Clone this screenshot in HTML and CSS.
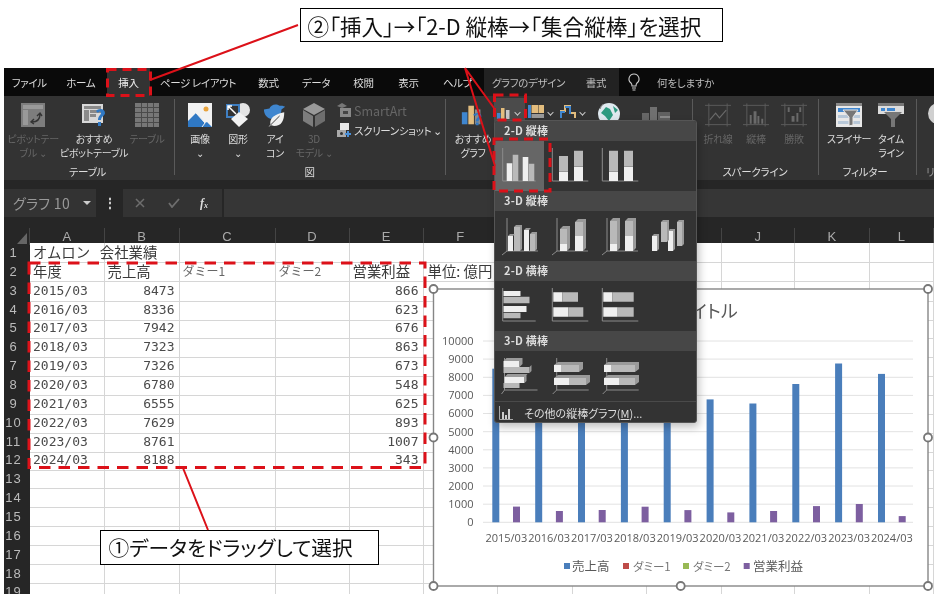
FILE: index.html
```html
<!DOCTYPE html>
<html lang="ja">
<head>
<meta charset="utf-8">
<title>Excel グラフの挿入</title>
<link rel="stylesheet" href="styles.css">
</head>
<body>
<div class="page">
  <div class="app">
    <nav class="tabs">
      <span class="tab">ファイル</span><span class="tab">ホーム</span><span class="tab on">挿入</span><span class="tab">ページ レイアウト</span><span class="tab">数式</span><span class="tab">データ</span><span class="tab">校閲</span><span class="tab">表示</span><span class="tab">ヘルプ</span>
      <span class="ctx"><span class="tab">グラフのデザイン</span><span class="tab">書式</span></span>
      <span class="tellwrap">
        <svg class="bulb" viewBox="0 0 14 18"><path d="M7 1a5 5 0 0 0-3 9c.7.7 1 1.5 1 3h4c0-1.500.3-2.300 1-3A5 5 0 0 0 7 1zM5 15h4M5.500 17h3" fill="none" stroke="#ccc" stroke-width="1.100"/></svg>
        <span class="tell">何をしますか</span>
      </span>
    </nav>

    <section class="ribbon">
      <div class="group g-table">
        <div class="tools">
          <div class="btn w50 off">
            <svg class="ico" viewBox="0 0 24 24"><rect width="24" height="24" fill="#7d7d7d"/><path d="M2 2h20v4H2zM2 7h5v15H2z" fill="#999"/><path d="M11 19c5 0 8-3 8-8M16 13l3-3 2 3M13 16l-3 3 3 2" fill="none" stroke="#333" stroke-width="1.400"/></svg>
            <span>ピボットテー<br>ブル ⌄</span>
          </div>
          <div class="btn w72">
            <svg class="ico" viewBox="0 0 24 24"><rect x="0" y="1" width="21" height="19" fill="#d8d8d8"/><path d="M2 3h17v3H2zM2 7h5v11H2zM8 7h11v3H8zM8 11h6v3H8z" fill="#8a8a8a"/><path d="M14 8c2-3 9-3 9 2 0 3-4 3-4 7h-3c0-4 3-5 3-7s-2-2-3 0zM16 19h3v4h-3z" fill="#2f78c4"/></svg>
            <span>おすすめ<br>ピボットテーブル</span>
          </div>
          <div class="btn w34 off">
            <svg class="ico" viewBox="0 0 24 24"><rect width="24" height="24" fill="#777"/><path d="M0 4h24v1H0zM0 9h24v1H0zM0 14h24v1H0zM0 19h24v1H0zM6 0h1v24H6zM12 0h1v24h-1zM18 0h1v24h-1z" fill="#4a4a4a"/></svg>
            <span>テーブル</span>
          </div>
        </div>
        <div class="glabel">テーブル</div>
      </div>

      <div class="group g-pic">
        <div class="tools">
          <div class="btn w38">
            <svg class="ico" viewBox="0 0 24 24"><rect width="24" height="24" fill="#f2f2f2"/><circle cx="18" cy="6" r="2.500" fill="#e8a33d"/><path d="M0 24v-6l8-8 9 10 2-1 5 5z" fill="#2f78c4"/><path d="M8 10l9 10-3 4" fill="none" stroke="#f2f2f2"/></svg>
            <span>画像<br>⌄</span>
          </div>
          <div class="btn w38">
            <svg class="ico wide" viewBox="0 0 26 24"><circle cx="18" cy="7" r="7" fill="#e4e4e4"/><path d="M1 1h14v14H1z" fill="#3f7fc2"/><path d="M3 3h10v10H3z" fill="#333"/><path d="M3 3l8 8M7 3H3v4" stroke="#fff" fill="none" stroke-width="1.500"/><path d="M14 9l9 7-9 8-8-8z" fill="#f2f2f2"/></svg>
            <span>図形<br>⌄</span>
          </div>
          <div class="btn w36">
            <svg class="ico wide" viewBox="0 0 26 26"><path d="M1 7l6-1c1-4 7-6 11-3 2 0 4 0 6 1l-4 3c0 7-6 11-12 10C4 16 1 12 1 7z" fill="#3f86cf"/><path d="M6 26l2-3c-1-7 5-11 15-13 0 9-3 15-11 15l-3-1z" fill="#f0f0f0"/><path d="M7 25L18 14" stroke="#333"/></svg>
            <span>アイ<br>コン</span>
          </div>
          <div class="btn w42 off">
            <svg class="ico" viewBox="0 0 24 24"><path d="M12 0l11 6-11 6L1 6z" fill="#999"/><path d="M1 7l10 6v11L1 18z" fill="#7d7d7d"/><path d="M23 7l-10 6v11l10-6z" fill="#6e6e6e"/></svg>
            <span>3D<br>モデル ⌄</span>
          </div>
          <div class="smalls">
            <div class="small off sa">
              <svg class="ico14" viewBox="0 0 14 14"><path d="M0 3l5-3 5 3-5 2z" fill="#777"/><rect x="3" y="5" width="11" height="9" fill="#888"/><rect x="6" y="8" width="5" height="3" fill="#444"/></svg>
              <span>SmartArt</span>
            </div>
            <div class="small">
              <svg class="ico14" viewBox="0 0 14 14"><rect x="3" y="0" width="9" height="7" fill="#e8e8e8"/><rect x="0" y="7" width="9" height="7" fill="#aaa"/><circle cx="4.500" cy="10.500" r="1.500" fill="#333"/><path d="M11 8v6M8 11h6" stroke="#4a90d9" stroke-width="2"/></svg>
              <span>スクリーンショット ⌄</span>
            </div>
          </div>
        </div>
        <div class="glabel">図</div>
      </div>

      <div class="group g-chart">
        <div class="tools">
          <div class="btn w42 rec">
            <svg class="ico wide" viewBox="0 0 28 24"><rect x="2" y="9" width="6" height="13" fill="#3f86cf"/><rect x="9" y="2" width="6" height="20" fill="#e3bd7e"/><rect x="16" y="6" width="6" height="16" fill="#8a8a8a"/><path d="M14 12c2-3 9-3 9 1 0 3-3 3-3 6h-3c0-4 3-4 3-6s-2-2-3 0zM17 20h3v3h-3z" fill="#2f78c4"/></svg>
            <span>おすすめ<br>グラフ</span>
          </div>
          <div class="cbtn hot">
            <svg class="ci" viewBox="0 0 14 11"><rect x="0" y="5" width="3.500" height="6" fill="#3f86cf"/><rect x="4" y="0" width="3.500" height="11" fill="#e3bd7e"/><rect x="9" y="2" width="3.500" height="9" fill="#c8c8c8"/></svg><b class="chev"></b>
          </div>
          <div class="cbtn b31">
            <svg class="ci big" viewBox="0 0 16 13"><rect x="0" y="0" width="3" height="13" fill="#3f86cf"/><rect x="3.500" y="0" width="7" height="8" fill="#e3bd7e"/><rect x="11" y="0" width="5" height="8" fill="#e3bd7e"/><rect x="3.500" y="9" width="12.500" height="4" fill="#999"/></svg><b class="chev"></b>
          </div>
          <div class="cbtn b34">
            <svg class="ci big" viewBox="0 0 16 13"><path d="M1 12V6h4V1h5v7h5v5" fill="none" stroke="#e3bd7e" stroke-width="2"/><path d="M1 13V7h4" fill="none" stroke="#3f86cf" stroke-width="2"/><path d="M5 2h5v7" fill="none" stroke="#3f86cf" stroke-width="2"/></svg><b class="chev"></b>
          </div>
          <svg class="globe" viewBox="0 0 22 18"><circle cx="11" cy="11" r="11" fill="#dfe9ef"/><path d="M3 10l5-6 4 2 3 6-4 6-4-5zM15 3l5 4-3 3z" fill="#2d9a80"/><path d="M5 1A13 13 0 0 0 2 6" stroke="#777" fill="none"/></svg>
          <svg class="pivotc" viewBox="0 0 28 13"><rect x="0" y="6" width="7" height="7" fill="#666"/><rect x="8" y="0" width="7" height="13" fill="#707070"/><rect x="16" y="5" width="12" height="8" fill="#616161"/><rect x="18" y="9" width="10" height="2" fill="#8a8a8a"/></svg>
        </div>
      </div>

      <div class="group g-spark">
        <div class="tools">
          <div class="btn w38 off">
            <svg class="ico wide" viewBox="0 0 27 24"><path d="M0 2h27M0 22h27M4 0v24M23 0v24" stroke="#5c5c5c" fill="none"/><path d="M5 17l6-7 4 5 7-8" stroke="#6a6a6a" fill="none" stroke-width="1.200"/></svg>
            <span>折れ線</span>
          </div>
          <div class="btn w38 off">
            <svg class="ico wide" viewBox="0 0 27 24"><path d="M0 2h27M0 22h27M4 0v24M23 0v24" stroke="#5c5c5c" fill="none"/><path d="M7 12h2v9H7zM11 8h3v13h-3zM15 13h2v8h-2zM19 16h2v5h-2z" fill="#6a6a6a"/></svg>
            <span>縦棒</span>
          </div>
          <div class="btn w38 off">
            <svg class="ico wide" viewBox="0 0 27 24"><path d="M0 2h27M0 22h27M4 0v24M23 0v24" stroke="#5c5c5c" fill="none"/><path d="M7 4h2v5H7zM19 4h2v5h-2zM11 13h3v6h-3zM16 10h2v9h-2z" fill="#6a6a6a"/></svg>
            <span>勝敗</span>
          </div>
        </div>
        <div class="glabel">スパークライン</div>
      </div>

      <div class="group g-filter">
        <div class="tools">
          <div class="btn w56">
            <svg class="ico wide" viewBox="0 0 26 24"><rect width="26" height="24" fill="#e8e8e8"/><rect width="26" height="3" fill="#8a8a8a"/><rect x="2" y="5" width="22" height="4" fill="#3f86cf"/><rect x="2" y="12" width="22" height="3" fill="#b8c8d8"/><rect x="2" y="18" width="22" height="3" fill="#b8c8d8"/><path d="M7 7h15l-5 7v8l-4 1v-9z" fill="#777" stroke="#e8e8e8"/></svg>
            <span>スライサー</span>
          </div>
          <div class="btn w28">
            <svg class="ico wide" viewBox="0 0 26 24"><rect y="3" width="26" height="8" fill="#dcdcdc"/><rect y="0" width="26" height="3" fill="#777"/><rect x="3" y="5" width="4" height="3" fill="#3f86cf"/><rect x="9" y="5" width="8" height="3" fill="#3f86cf"/><path d="M6 9h18l-7 7v8h-4v-8z" fill="#777"/></svg>
            <span>タイム<br>ライン</span>
          </div>
        </div>
        <div class="glabel">フィルター</div>
      </div>

      <div class="group g-link">
        <div class="edge-disc"></div>
        <div class="glabel">リ</div>
      </div>
    </section>

    <section class="fbar">
      <div class="namebox">グラフ 10<b class="tri"></b></div>
      <div class="fdots">⋮</div>
      <div class="fbtns">
        <svg class="fx-ico" viewBox="0 0 10 10"><path d="M1 1l8 8M9 1L1 9" stroke="#6e6e6e" stroke-width="1.500"/></svg>
        <svg class="fx-ico" viewBox="0 0 12 10"><path d="M1 5l3 4 7-8" stroke="#6e6e6e" stroke-width="1.800" fill="none"/></svg>
        <span class="fx">f<sub>x</sub></span>
      </div>
      <div class="finput"></div>
    </section>

    <section class="sheet">
      <div class="row heads">
        <div class="corner"></div><div>A</div><div>B</div><div>C</div><div>D</div><div>E</div><div>F</div><div>G</div><div>H</div><div>I</div><div>J</div><div>K</div><div>L</div>
      </div>
      <div class="row"><div class="rh">1</div><div class="c jp">オムロン&nbsp;&nbsp;&nbsp;会社業績</div><div class="c"></div><div class="c"></div><div class="c"></div><div class="c"></div><div class="c"></div><div class="c"></div><div class="c"></div><div class="c"></div><div class="c"></div><div class="c"></div><div class="c"></div></div>
      <div class="row"><div class="rh">2</div><div class="c jp">年度</div><div class="c jp">売上高</div><div class="c dummy">ダミー1</div><div class="c dummy">ダミー2</div><div class="c jp">営業利益</div><div class="c jp unit">単位: 億円</div><div class="c"></div><div class="c"></div><div class="c"></div><div class="c"></div><div class="c"></div><div class="c"></div></div>
      <div class="row"><div class="rh">3</div><div class="c">2015/03</div><div class="c r">8473</div><div class="c"></div><div class="c"></div><div class="c r">866</div><div class="c"></div><div class="c"></div><div class="c"></div><div class="c"></div><div class="c"></div><div class="c"></div><div class="c"></div></div>
      <div class="row"><div class="rh">4</div><div class="c">2016/03</div><div class="c r">8336</div><div class="c"></div><div class="c"></div><div class="c r">623</div><div class="c"></div><div class="c"></div><div class="c"></div><div class="c"></div><div class="c"></div><div class="c"></div><div class="c"></div></div>
      <div class="row"><div class="rh">5</div><div class="c">2017/03</div><div class="c r">7942</div><div class="c"></div><div class="c"></div><div class="c r">676</div><div class="c"></div><div class="c"></div><div class="c"></div><div class="c"></div><div class="c"></div><div class="c"></div><div class="c"></div></div>
      <div class="row"><div class="rh">6</div><div class="c">2018/03</div><div class="c r">7323</div><div class="c"></div><div class="c"></div><div class="c r">863</div><div class="c"></div><div class="c"></div><div class="c"></div><div class="c"></div><div class="c"></div><div class="c"></div><div class="c"></div></div>
      <div class="row"><div class="rh">7</div><div class="c">2019/03</div><div class="c r">7326</div><div class="c"></div><div class="c"></div><div class="c r">673</div><div class="c"></div><div class="c"></div><div class="c"></div><div class="c"></div><div class="c"></div><div class="c"></div><div class="c"></div></div>
      <div class="row"><div class="rh">8</div><div class="c">2020/03</div><div class="c r">6780</div><div class="c"></div><div class="c"></div><div class="c r">548</div><div class="c"></div><div class="c"></div><div class="c"></div><div class="c"></div><div class="c"></div><div class="c"></div><div class="c"></div></div>
      <div class="row"><div class="rh">9</div><div class="c">2021/03</div><div class="c r">6555</div><div class="c"></div><div class="c"></div><div class="c r">625</div><div class="c"></div><div class="c"></div><div class="c"></div><div class="c"></div><div class="c"></div><div class="c"></div><div class="c"></div></div>
      <div class="row"><div class="rh">10</div><div class="c">2022/03</div><div class="c r">7629</div><div class="c"></div><div class="c"></div><div class="c r">893</div><div class="c"></div><div class="c"></div><div class="c"></div><div class="c"></div><div class="c"></div><div class="c"></div><div class="c"></div></div>
      <div class="row"><div class="rh">11</div><div class="c">2023/03</div><div class="c r">8761</div><div class="c"></div><div class="c"></div><div class="c r">1007</div><div class="c"></div><div class="c"></div><div class="c"></div><div class="c"></div><div class="c"></div><div class="c"></div><div class="c"></div></div>
      <div class="row"><div class="rh">12</div><div class="c">2024/03</div><div class="c r">8188</div><div class="c"></div><div class="c"></div><div class="c r">343</div><div class="c"></div><div class="c"></div><div class="c"></div><div class="c"></div><div class="c"></div><div class="c"></div><div class="c"></div></div>
      <div class="row"><div class="rh">13</div><div class="c"></div><div class="c"></div><div class="c"></div><div class="c"></div><div class="c"></div><div class="c"></div><div class="c"></div><div class="c"></div><div class="c"></div><div class="c"></div><div class="c"></div><div class="c"></div></div>
      <div class="row"><div class="rh">14</div><div class="c"></div><div class="c"></div><div class="c"></div><div class="c"></div><div class="c"></div><div class="c"></div><div class="c"></div><div class="c"></div><div class="c"></div><div class="c"></div><div class="c"></div><div class="c"></div></div>
      <div class="row"><div class="rh">15</div><div class="c"></div><div class="c"></div><div class="c"></div><div class="c"></div><div class="c"></div><div class="c"></div><div class="c"></div><div class="c"></div><div class="c"></div><div class="c"></div><div class="c"></div><div class="c"></div></div>
      <div class="row"><div class="rh">16</div><div class="c"></div><div class="c"></div><div class="c"></div><div class="c"></div><div class="c"></div><div class="c"></div><div class="c"></div><div class="c"></div><div class="c"></div><div class="c"></div><div class="c"></div><div class="c"></div></div>
      <div class="row"><div class="rh">17</div><div class="c"></div><div class="c"></div><div class="c"></div><div class="c"></div><div class="c"></div><div class="c"></div><div class="c"></div><div class="c"></div><div class="c"></div><div class="c"></div><div class="c"></div><div class="c"></div></div>
      <div class="row"><div class="rh">18</div><div class="c"></div><div class="c"></div><div class="c"></div><div class="c"></div><div class="c"></div><div class="c"></div><div class="c"></div><div class="c"></div><div class="c"></div><div class="c"></div><div class="c"></div><div class="c"></div></div>
      <div class="row"><div class="rh">19</div><div class="c"></div><div class="c"></div><div class="c"></div><div class="c"></div><div class="c"></div><div class="c"></div><div class="c"></div><div class="c"></div><div class="c"></div><div class="c"></div><div class="c"></div><div class="c"></div></div>
    </section>
  </div>

  <svg class="chart" viewBox="433 289 500 300">
    <rect class="frame" x="433.500" y="289" width="494.500" height="297"/>
    <g class="gl">
      <path d="M483 341h430M483 359.100h430M483 377.300h430M483 395.400h430M483 413.500h430M483 431.700h430M483 449.800h430M483 467.900h430M483 486h430M483 504.200h430M483 522.300h430"/>
    </g>
    <text class="title" x="681" y="318">グラフ タイトル</text>
    <g class="yax">
      <text x="473.500" y="345">10000</text><text x="473.500" y="363">9000</text><text x="473.500" y="381">8000</text><text x="473.500" y="399">7000</text><text x="473.500" y="417">6000</text><text x="473.500" y="435.500">5000</text><text x="473.500" y="453.500">4000</text><text x="473.500" y="472">3000</text><text x="473.500" y="490">2000</text><text x="473.500" y="508">1000</text><text x="473.500" y="526">0</text>
    </g>
    <g class="blue">
      <rect x="492.300" y="368.700" width="7" height="153.600"/><rect x="535.200" y="371.200" width="7" height="151.100"/><rect x="578" y="378.300" width="7" height="144"/><rect x="620.900" y="389.500" width="7" height="132.800"/><rect x="663.700" y="389.500" width="7" height="132.800"/><rect x="706.600" y="399.400" width="7" height="122.900"/><rect x="749.400" y="403.500" width="7" height="118.800"/><rect x="792.300" y="384" width="7" height="138.300"/><rect x="835.100" y="363.500" width="7" height="158.800"/><rect x="878" y="373.900" width="7" height="148.400"/>
    </g>
    <g class="purple">
      <rect x="513" y="506.600" width="7" height="15.700"/><rect x="555.900" y="511" width="7" height="11.300"/><rect x="598.700" y="510" width="7" height="12.300"/><rect x="641.600" y="506.700" width="7" height="15.600"/><rect x="684.400" y="510.100" width="7" height="12.200"/><rect x="727.300" y="512.400" width="7" height="9.900"/><rect x="770.100" y="511" width="7" height="11.300"/><rect x="813" y="506.100" width="7" height="16.200"/><rect x="855.800" y="504" width="7" height="18.300"/><rect x="898.700" y="516.100" width="7" height="6.200"/>
    </g>
    <g class="xax">
      <text x="506.300" y="542">2015/03</text><text x="549.100" y="542">2016/03</text><text x="592" y="542">2017/03</text><text x="634.800" y="542">2018/03</text><text x="677.700" y="542">2019/03</text><text x="720.500" y="542">2020/03</text><text x="763.400" y="542">2021/03</text><text x="806.200" y="542">2022/03</text><text x="849.100" y="542">2023/03</text><text x="891.900" y="542">2024/03</text>
    </g>
    <g class="legend">
      <rect class="lb" x="564" y="563" width="6" height="6"/><text x="572" y="570.500">売上高</text>
      <rect class="lr" x="623" y="563" width="6" height="6"/><text class="lg" x="633" y="570.500">ダミー1</text>
      <rect class="lg2" x="683" y="563" width="6" height="6"/><text class="lg" x="693" y="570.500">ダミー2</text>
      <rect class="lp" x="743.700" y="563" width="6" height="6"/><text x="753" y="570.500">営業利益</text>
    </g>
    <g class="handles">
      <circle cx="433.500" cy="289" r="4"/><circle cx="928" cy="289" r="4"/><circle cx="433.500" cy="437.500" r="4"/><circle cx="928" cy="437.500" r="4"/><circle cx="433.500" cy="586" r="4"/><circle cx="680.700" cy="586" r="4"/><circle cx="928" cy="586" r="4"/>
    </g>
  </svg>

  <aside class="menu">
    <h4>2-D 縦棒</h4>
    <div class="irow">
      <svg class="mi hov" viewBox="0 0 50 50"><path class="ax" d="M8.700 7v33h33"/><path class="lt" d="M12.700 22.300h5.600V40h-5.600zM28.700 16h5.600v24h-5.600z"/><path class="md" d="M18.700 13.700h5.600V40h-5.600zM34.700 22.700h5.600V40h-5.600z"/></svg>
      <svg class="mi" viewBox="0 0 50 50"><path class="ax" d="M8.300 7v33h36"/><path class="md" d="M15 15h9v15.700h-9zM30 9.700h9v16h-9z"/><path class="lt" d="M15 31h9v9h-9zM30 26h9v14h-9z"/></svg>
      <svg class="mi" viewBox="0 0 50 50"><path class="ax" d="M8.300 7v33h36"/><path class="md" d="M15 9.700h9v21h-9zM30 9.700h9v16h-9z"/><path class="lt" d="M15 31h9v9h-9zM30 26h9v14h-9z"/></svg>
    </div>
    <h4>3-D 縦棒</h4>
    <div class="irow">
      <svg class="mi" viewBox="0 0 50 50"><path class="ax" d="M13 7v33M13 40l-5 4M13 40h31"/><path class="lt" d="M14 25h5v15h-5z"/><path class="md" d="M20 16h6v24h-6zM36 23h5v17h-5z"/><path class="lt" d="M30 19h5v21h-5z"/><path class="sd" d="M14 25l2-2h5l-2 2zM20 16l2-2h6l-2 2zM26 16l2-2v24l-2 2zM30 19l2-2h5l-2 2zM36 23l2-2h5l-2 2zM41 23l2-2v17l-2 2z"/></svg>
      <svg class="mi" viewBox="0 0 50 50"><path class="ax" d="M13 7v33M13 40l-5 4M13 40h31"/><path class="md" d="M16 18h7v15h-7zM31 11h8v14h-8z"/><path class="lt" d="M16 33h7v7h-7zM31 25h8v15h-8z"/><path class="sd" d="M16 18l3-3h7l-3 3zM23 18l3-3v22l-3 3zM31 11l3-3h8l-3 3zM39 11l3-3v29l-3 3z"/></svg>
      <svg class="mi" viewBox="0 0 50 50"><path class="ax" d="M13 7v33M13 40l-5 4M13 40h31"/><path class="md" d="M16 10h7v23h-7zM31 10h8v15h-8z"/><path class="lt" d="M16 33h7v7h-7zM31 25h8v15h-8z"/><path class="sd" d="M16 10l3-3h7l-3 3zM23 10l3-3v30l-3 3zM31 10l3-3h8l-3 3zM39 10l3-3v30l-3 3z"/></svg>
      <svg class="mi" viewBox="0 0 50 50"><path class="lt" d="M8 25h5v15H8z"/><path class="md" d="M17 11h6v20h-6z"/><path class="lt" d="M24 20h5v20h-5z"/><path class="md" d="M33 11h5v24h-5z"/><path class="sd" d="M8 25l2-2h5l-2 2zM13 25l2-2v15l-2 2zM17 11l2-2h6l-2 2zM23 11l2-2v20l-2 2zM24 20l2-2h5l-2 2zM29 20l2-2v20l-2 2zM33 11l2-2h5l-2 2zM38 11l2-2v24l-2 2z"/></svg>
    </div>
    <h4>2-D 横棒</h4>
    <div class="irow">
      <svg class="mi" viewBox="0 0 50 50"><path class="ax" d="M8.700 7v33h33"/><path class="lt" d="M9.500 10h17v5h-17zM9.500 25h23v6h-23z"/><path class="md" d="M9.500 15.700h26v6.600h-26zM9.500 31.700h17v5.600h-17z"/></svg>
      <svg class="mi" viewBox="0 0 50 50"><path class="ax" d="M8.300 7v33h36"/><path class="lt" d="M9.300 11.300h9v9.400h-9zM9.300 26.300h15v9.400h-15z"/><path class="md" d="M18.300 11.300H34v9.400H18.300zM24.300 26.300h15v9.400h-15z"/></svg>
      <svg class="mi" viewBox="0 0 50 50"><path class="ax" d="M8.300 7v33h36"/><path class="lt" d="M9.300 11.300h9v9.400h-9zM9.300 26.300h14.400v9.400H9.300z"/><path class="md" d="M18.300 11.300h21.400v9.400H18.300zM23.700 26.300h16v9.400h-16z"/></svg>
    </div>
    <h4>3-D 横棒</h4>
    <div class="irow">
      <svg class="mi" viewBox="0 0 50 50"><path class="ax" d="M10.500 7v32M10.500 39l-3 4M10.500 39h33"/><path class="lt" d="M9.500 10h16v6h-16z"/><path class="md" d="M9.500 16h26v6h-26z"/><path class="lt" d="M10.500 26h20v6h-20z"/><path class="md" d="M9.500 32h16v5h-16z"/><path class="sd" d="M9.500 10l3-3h16l-3 3zM25.500 10l3-3v6l-3 3zM35.500 16l2-2v6l-2 2zM10.500 26l3-3h20l-3 3zM30.500 26l2-2v6l-2 2z"/></svg>
      <svg class="mi" viewBox="0 0 50 50"><path class="ax" d="M12.700 7v32M12.700 39l-4 4M12.700 39h32"/><path class="lt" d="M10 14h7v7h-7zM10 27h15v7H10z"/><path class="md" d="M17 14h18v7H17zM25 27h17v7H25z"/><path class="sd" d="M10 14l4-3h25l-4 3zM35 14l4-3v7l-4 3zM10 27l4-3h32l-4 3zM42 27l4-3v7l-4 3z"/></svg>
      <svg class="mi" viewBox="0 0 50 50"><path class="ax" d="M12.700 7v32M12.700 39l-4 4M12.700 39h32"/><path class="lt" d="M10 14h7v7h-7zM10 27h15v7H10z"/><path class="md" d="M17 14h24v7H17zM25 27h16v7H25z"/><path class="sd" d="M10 14l4-3h31l-4 3zM41 14l4-3v7l-4 3zM10 27l4-3h31l-4 3zM41 27l4-3v7l-4 3z"/></svg>
    </div>
    <div class="more">
      <svg class="more-ico" viewBox="0 0 14 14"><path d="M.5 0v13.500H14" stroke="#aaa" fill="none"/><path d="M3 6h2v7H3zM6 9h2v4H6zM9 3h2v10H9z" fill="#ccc"/></svg>
      <span>その他の縦棒グラフ(<u>M</u>)...</span>
    </div>
  </aside>

  <div class="callout c2">②「挿入」→「2-D 縦棒→「集合縦棒」を選択</div>
  <div class="callout c1">①データをドラッグして選択</div>

  <svg class="marks" viewBox="0 0 950 601">
    <path class="line" d="M298 25L150 80M465 68L494 108M465 68L495 166M183 468L208 530"/>
    <rect class="dash" x="107.500" y="69.500" width="43" height="26"/>
    <rect class="dash" x="494.500" y="95" width="31" height="25"/>
    <rect class="dash" x="494" y="139" width="56" height="52"/>
    <rect class="dash long" x="29" y="263" width="396" height="204.500"/>
  </svg>
</div>
</body>
</html>
```
FILE: styles.css
```css
* { box-sizing: border-box; }
html, body { margin: 0; background: #fff; }
body { font-family: "Noto Sans CJK JP", "Noto Sans", sans-serif; font-feature-settings: "palt"; color: #ddd; }

.page { position: relative; width: 950px; height: 601px; padding: 68px 16px 7px 4px; overflow: hidden; filter: blur(.35px); }
.app { height: 526px; overflow: hidden; background: #262626; }

/* tabs */
.tabs { display: grid; grid-template-columns: 50.500px 52.500px 43px 96px 45px 50px 45px 45px 53px 135px 1fr; height: 28px; background: #0a0a0a; font-size: 10.500px; color: #ddd; }
.tab { display: flex; align-items: center; justify-content: center; white-space: nowrap; letter-spacing: -.35px; }
.tab.on { background: #333; color: #eee; }
.ctx { display: grid; grid-template-columns: 89px 46px; background: #222; color: #bbb; }
.tellwrap { display: flex; align-items: center; padding-left: 8px; }
.bulb { width: 14px; height: 18px; flex: none; }
.tell { margin-left: 16px; color: #bbb; letter-spacing: -.2px; }

/* ribbon */
.ribbon { display: flex; height: 84px; background: #333; }
.group { position: relative; flex: none; display: flex; flex-direction: column; height: 100%; }
.group::after { content: ""; position: absolute; right: 0; top: 3px; bottom: 5px; width: 1px; background: #5a5a5a; }
.g-table { width: 171px; padding-left: 4px; }
.g-pic { width: 271px; padding-left: 6px; }
.g-chart { width: 247px; padding-left: 6px; }
.g-spark { width: 126px; padding-left: 6px; }
.g-filter { width: 98px; padding-left: 2px; }
.g-link { width: 17px; padding-top: 7px; overflow: hidden; }
.g-link::after { display: none; }
.tools { display: flex; flex: 1; padding-top: 7px; }
.glabel { height: 20px; line-height: 24px; font-size: 10.500px; text-align: center; color: #ddd; letter-spacing: -.25px; padding-right: 8px; }
.g-link .glabel { margin-top: auto; text-align: left; color: #999; padding: 0 0 0 9px; }
.edge-disc { width: 21px; height: 21px; margin-left: 11px; border-radius: 50%; background: #d0d0d0; flex: none; }

.btn { flex: none; display: flex; flex-direction: column; align-items: center; font-size: 10px; line-height: 14px; text-align: center; white-space: nowrap; color: #ddd; letter-spacing: -.3px; }
.btn span { margin-top: 5px; }
.btn.off, .small.off { color: #666; }
.ico { width: 24px; height: 24px; flex: none; }
.ico.wide { width: 26px; }
.w28 { width: 28px; } .w34 { width: 34px; } .w36 { width: 36px; } .w38 { width: 38px; }
.w42 { width: 42px; } .w50 { width: 50px; } .w56 { width: 56px; } .w72 { width: 72px; }

.smalls { display: flex; flex-direction: column; gap: 6px; margin-left: 2px; }
.small { display: flex; align-items: center; gap: 3px; height: 14px; font-size: 10.500px; letter-spacing: -.35px; white-space: nowrap; color: #ddd; }
.small.sa { font-size: 12.500px; letter-spacing: 0; }
.ico14 { width: 14px; height: 14px; flex: none; }

.cbtn { flex: none; display: flex; align-items: flex-start; gap: 4px; width: 31px; height: 24px; padding: 8px 0 0 3px; margin-top: -5px; }
.cbtn.hot { background: #4b4b4b; }
.cbtn.b34 { width: 34px; padding-left: 4px; }
.ci { width: 14px; height: 11px; flex: none; margin-top: 2px; }
.ci.big { width: 16px; height: 13px; margin-top: -1px; }
.chev { width: 5px; height: 5px; margin-top: 4px; border-right: 1px solid #ccc; border-bottom: 1px solid #ccc; transform: rotate(45deg) scale(.9); flex: none; }
.globe { flex: none; width: 22px; height: 18px; margin-left: 8px; }
.pivotc { flex: none; width: 28px; height: 13px; margin: 4px 0 0 22px; }

/* formula bar */
.fbar { display: flex; height: 28px; margin-top: 9px; }
.namebox { display: flex; align-items: center; width: 92px; padding-left: 9px; background: #333; font-size: 14px; color: #999; letter-spacing: .3px; }
.tri { width: 0; height: 0; margin-left: 13px; border: 4px solid transparent; border-top-color: #ccc; border-bottom: 0; }
.fdots { width: 27px; line-height: 26px; text-align: center; color: #ccc; font-size: 14px; font-weight: 700; }
.fbtns { display: flex; align-items: center; width: 99px; padding-left: 12px; background: #333; }
.fx-ico { width: 10px; height: 10px; flex: none; margin-right: 23px; }
.fx-ico + .fx-ico { width: 12px; margin-right: 20px; }
.fx { font: italic 700 12px "Liberation Serif", serif; color: #ddd; }
.fx sub { font-size: 8px; vertical-align: -1px; }
.finput { flex: 1; margin-left: 2px; background: #363636; }

/* sheet */
.sheet { margin-top: 11px; }
.row { display: grid; grid-template-columns: 26px 74.500px 75px 96px 74px 74px 74.500px 74.500px 74px 75px 73.500px 74.500px 64.500px; height: 18.870px; background: #fff; }
.heads { height: 15px; background: #262626; color: #aaa; font: 13px/17px "Liberation Sans", sans-serif; text-align: center; }
.heads > div { border-right: 1px solid #444; }
.corner { position: relative; }
.corner::after { content: ""; position: absolute; right: 2px; bottom: 1px; border-left: 10px solid transparent; border-bottom: 11px solid #666; }
.rh { background: #262626; color: #bbb; font: 13px/19px "Liberation Sans", sans-serif; letter-spacing: 1px; text-align: center; padding-right: 7px; border-bottom: 1px solid #3c3c3c; }
.c { border-right: 1px solid #d6d6d6; border-bottom: 1px solid #d6d6d6; padding-left: 3px; font: 13px/20px "DejaVu Sans Mono", monospace; color: #4a4a4a; white-space: nowrap; }
.r { text-align: right; padding: 0 4px 0 0; }
.jp { font: 14.400px/17px "Noto Sans CJK JP", sans-serif; font-feature-settings: normal; color: #3a3a3a; }
.dummy { font: 12px/17px "Noto Sans CJK JP", sans-serif; color: #666; }
.unit { padding-left: 4px; }

/* chart */
.chart { position: absolute; left: 433px; top: 289px; width: 500px; height: 300px; overflow: visible; }
.frame { fill: #fff; stroke: #868686; stroke-width: 1.400; }
.gl path { stroke: #e2e2e2; fill: none; stroke-width: 1; }
.title { font-size: 18px; fill: #595959; text-anchor: middle; }
.yax text { font: 11px "Open Sans", sans-serif; fill: #595959; text-anchor: end; }
.xax text { font: 11px "Open Sans", sans-serif; fill: #595959; text-anchor: middle; }
.blue rect, .lb { fill: #4a7ebb; }
.purple rect, .lp { fill: #7d5fa0; }
.lr { fill: #be4b48; }
.lg2 { fill: #98b954; }
.legend text { font-size: 12.500px; fill: #595959; }
.legend .lg { font-size: 11.500px; fill: #777; }
.handles circle { fill: #fff; stroke: #777; stroke-width: 1.800; }

/* dropdown */
.menu { position: absolute; left: 494px; top: 120px; width: 203px; height: 303px; background: #333; border: 1px solid #555; border-radius: 3px; box-shadow: 2px 4px 8px rgba(0,0,0,.25); overflow: hidden; }
.menu h4 { margin: 0; height: 20px; padding-left: 9px; background: #474747; font-size: 11px; font-weight: 700; line-height: 18px; color: #ddd; letter-spacing: .2px; }
.irow { display: flex; height: 50px; }
.mi { flex: none; width: 50px; height: 50px; margin-left: -1px; margin-right: 1px; }
.mi.hov { background: #666; }
.ax { fill: none; stroke: #8c8c8c; stroke-width: 1; }
.lt { fill: #efefef; }
.md { fill: #b9b9b9; }
.sd { fill: #9a9a9a; }
.more { display: flex; align-items: center; height: 22px; padding-left: 4px; border-top: 1px solid #4a4a4a; font-size: 11px; color: #ddd; white-space: nowrap; }
.more-ico { width: 14px; height: 14px; flex: none; margin-right: 11px; }

/* annotations */
.callout { position: absolute; display: flex; align-items: center; background: #fff; border: 1px solid #000; color: #111; white-space: nowrap; }
.c2 { left: 299.500px; top: 8px; width: 423px; height: 34px; padding-left: 7px; font-size: 21.600px; }
.c1 { left: 99.500px; top: 530px; width: 279.500px; height: 34.500px; padding-left: 8px; font-size: 20.700px; }
.marks { position: absolute; left: 0; top: 0; width: 950px; height: 601px; pointer-events: none; }
.line { fill: none; stroke: #dc1119; stroke-width: 2; }
.dash { fill: none; stroke: #dc1119; stroke-width: 3; stroke-dasharray: 9 6; }
.dash.long { stroke-dasharray: 11.500 8; }
```
